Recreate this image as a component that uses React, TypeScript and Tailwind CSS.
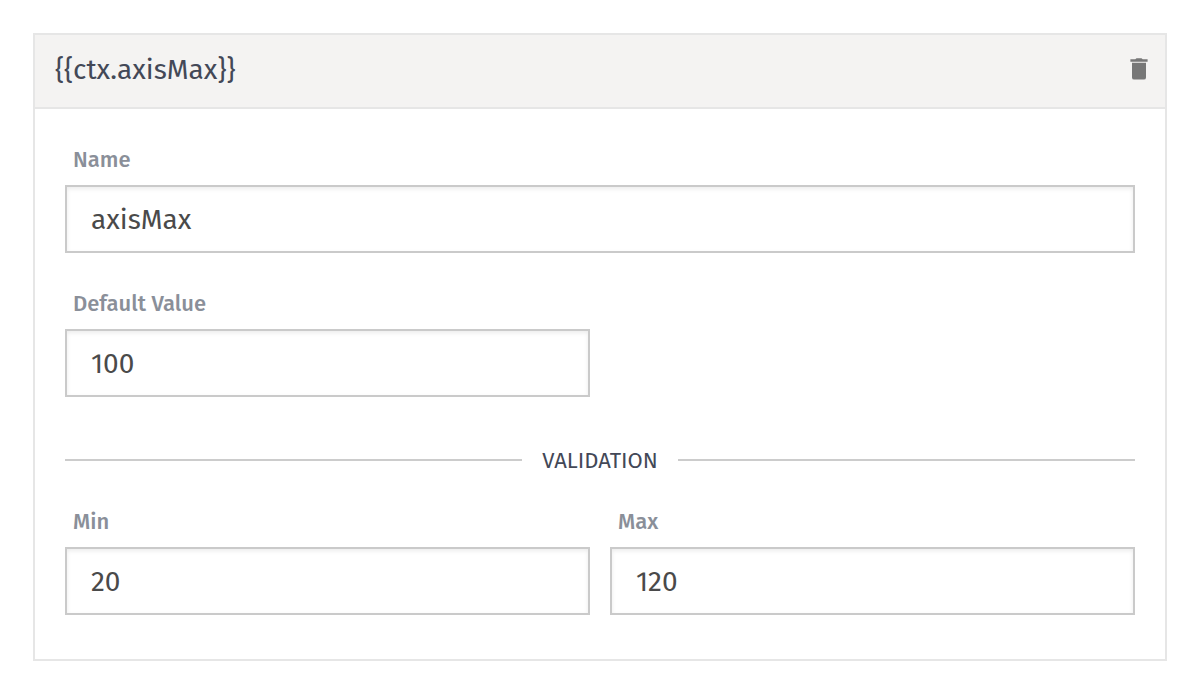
import { useId, useState } from "react";

interface FieldProps {
  label: string;
  value: string;
  onChange: (value: string) => void;
}

function Field({ label, value, onChange }: FieldProps) {
  const id = useId();
  return (
    <div className="flex min-w-0 flex-col">
      <label htmlFor={id} className="mb-[9px] px-2 text-[22px] leading-8 font-medium text-[#8a8f99]">
        {label}
      </label>
      <input
        id={id}
        type="text"
        value={value}
        onChange={(event) => onChange(event.target.value)}
        className="h-[68px] w-full border-2 border-[#cacaca] bg-white px-6 text-[28px] text-[#4a4a4a] shadow-[inset_0_2px_4px_rgba(10,10,10,0.08)] outline-none"
      />
    </div>
  );
}

export default function App() {
  const [name, setName] = useState("axisMax");
  const [defaultValue, setDefaultValue] = useState("100");
  const [min, setMin] = useState("20");
  const [max, setMax] = useState("120");

  return (
    <main className="min-h-screen bg-white p-[33px] font-['Fira_Sans','Noto_Sans',sans-serif]">
      <section className="border-2 border-[#e6e6e6]">
        <header className="flex h-[74px] items-center justify-between border-b-2 border-[#e6e6e6] bg-[#f4f3f2] pr-4 pl-5">
          <h1 className="pb-0.5 text-[28px] leading-9 text-[#434857]">{`{{ctx.${name}}}`}</h1>
          <button type="button" aria-label="Delete" className="pb-1 text-[#777777]">
            <svg viewBox="0 0 20 24" className="h-6 w-5" fill="currentColor" aria-hidden="true">
              <path d="M1.4 2.3h4.9L7.5 1.2h5l1.2 1.1h4.9V4.7H1.4zM3 5.7h14v14.7q0 2.2-2.2 2.2H5.2q-2.2 0-2.2-2.2z" />
            </svg>
          </button>
        </header>

        <div className="flex flex-col px-[30px] pt-[35px] pb-11">
          <Field label="Name" value={name} onChange={setName} />
          <div className="mt-[35px] grid grid-cols-2 gap-5">
            <Field label="Default Value" value={defaultValue} onChange={setDefaultValue} />
          </div>
          <div className="mt-[46px] mb-[29px] flex items-center gap-5">
            <span className="h-0.5 flex-1 bg-[#cccccc]" />
            <h2 className="pt-0.5 text-[22px] leading-8 text-[#434857]">VALIDATION</h2>
            <span className="h-0.5 flex-1 bg-[#cccccc]" />
          </div>
          <div className="grid grid-cols-2 gap-5">
            <Field label="Min" value={min} onChange={setMin} />
            <Field label="Max" value={max} onChange={setMax} />
          </div>
        </div>
      </section>
    </main>
  );
}
